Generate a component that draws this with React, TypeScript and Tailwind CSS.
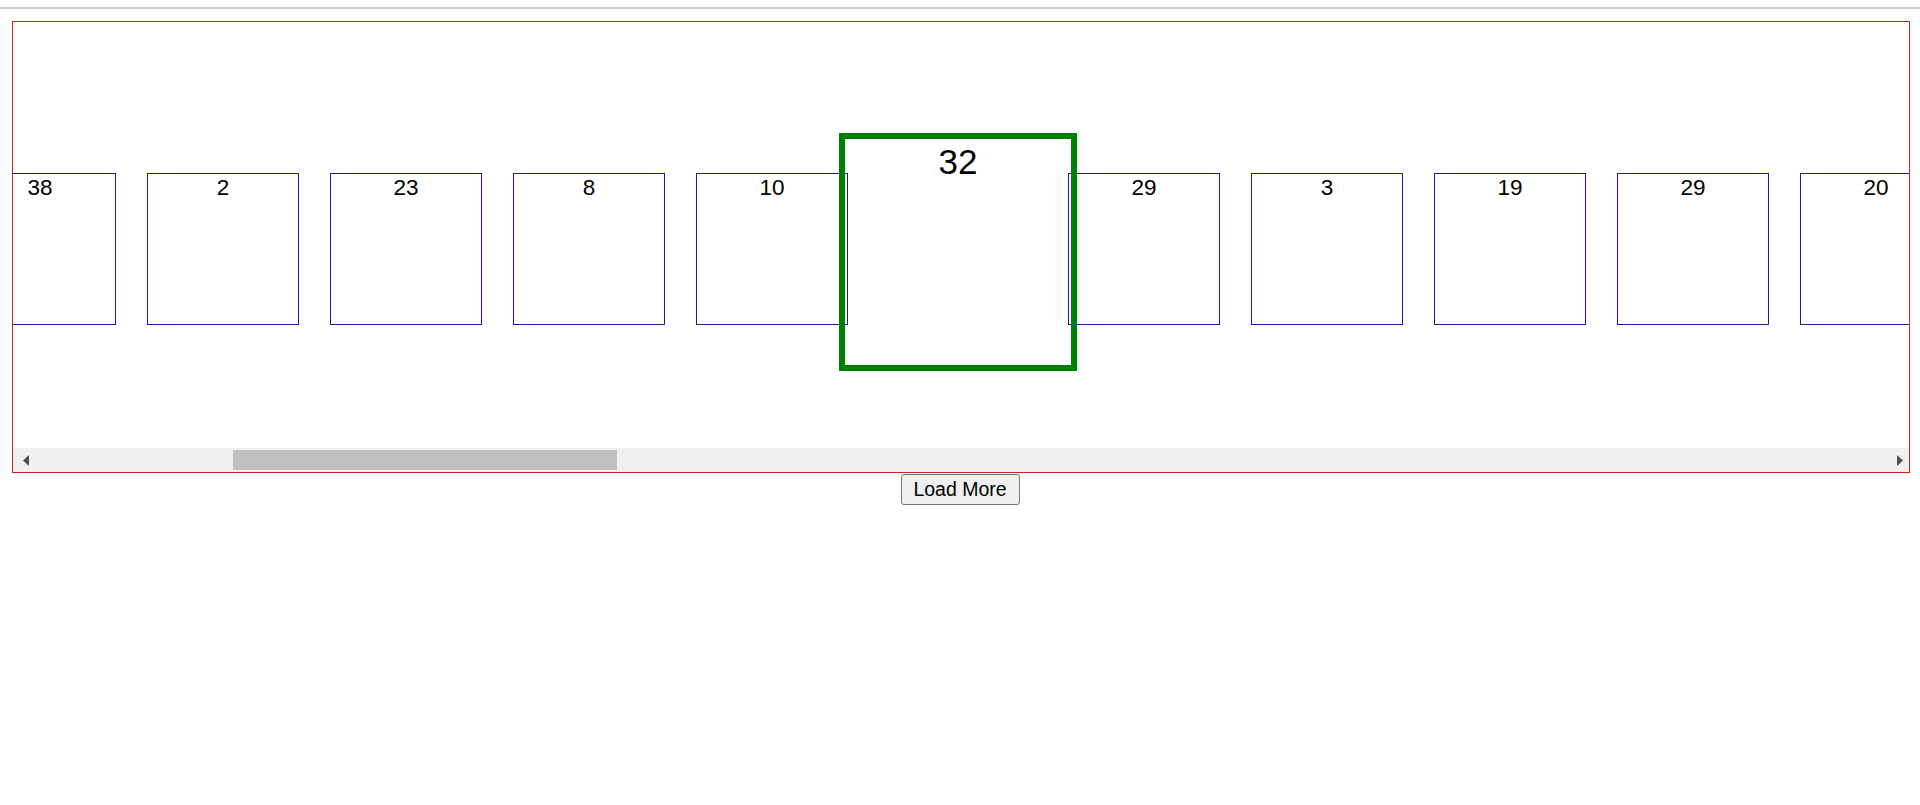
import React from "react";

const before = [38, 2, 23, 8, 10];
const after = [29, 3, 19, 29, 20];

function Box({ n }: { n: number }) {
  return (
    <div className="shrink-0 w-[152px] h-[152px] border border-[#1a1aa6] text-center text-[22.5px] leading-[28.5px] text-black">
      {n}
    </div>
  );
}

export default function App() {
  return (
    <div className="w-[1920px] h-[805px] bg-white font-['Liberation_Sans',Arial,sans-serif] overflow-hidden">
      <div className="pt-[7px]">
        <div className="h-[2px] bg-[#cfcfcf]" />
      </div>
      <div className="mt-[12px] ml-[12px] mr-[10px] border border-[#d02020]">
        <div className="h-[426px] overflow-hidden">
          <div className="flex items-start gap-[31px] pt-[151px] ml-[-49px]">
            {before.map((n, i) => (
              <Box key={"b" + i} n={n} />
            ))}
            <div className="relative z-10 shrink-0 w-[238px] h-[238px] mt-[-40px] mx-[-40px] border-[6px] border-[#008000] text-center text-[35px] leading-[45px] text-black">
              32
            </div>
            {after.map((n, i) => (
              <Box key={"a" + i} n={n} />
            ))}
          </div>
        </div>
        <div className="h-[24px] bg-[#f0f0f0] flex items-center">
          <div className="w-[16px] flex justify-end">
            <svg width="6" height="11" viewBox="0 0 6 11">
              <polygon points="6,0 6,11 0,5.5" fill="#505050" />
            </svg>
          </div>
          <div className="ml-[204px] w-[384px] h-[20px] bg-[#c1c1c1]" />
          <div className="flex-1" />
          <div className="w-[16px] mr-[6px] flex justify-end">
            <svg width="6" height="11" viewBox="0 0 6 11">
              <polygon points="0,0 0,11 6,5.5" fill="#505050" />
            </svg>
          </div>
        </div>
      </div>
      <div className="flex justify-center">
        <button className="w-[119px] h-[31px] mt-[1px] border border-[#767676] bg-[#efefef] rounded-[3px] text-[19.5px] leading-none text-black">
          Load More
        </button>
      </div>
    </div>
  );
}
